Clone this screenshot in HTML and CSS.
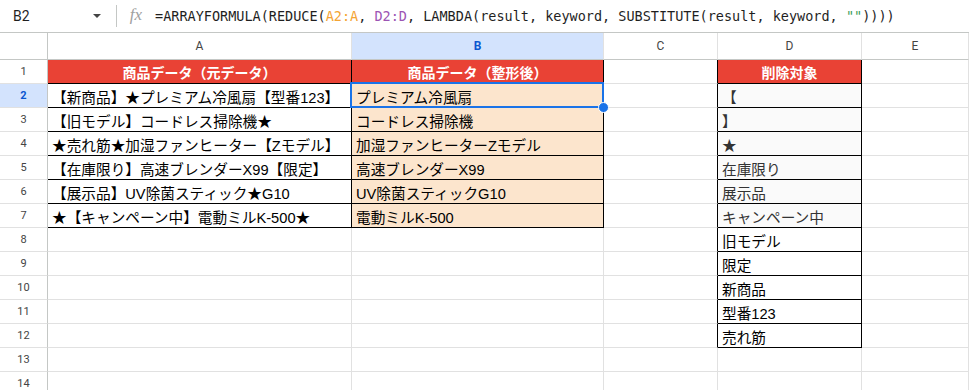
FILE: index.html
```html
<!DOCTYPE html>
<html lang="ja">
<head>
    <meta charset="UTF-8">
    <title>シート</title>
    <link rel="stylesheet" href="styles.css">
</head>
<body>

<div class="fbar">
    <div class="namebox">
        <span>B2</span>
        <i class="arrow"></i>
    </div>
    <div class="sep"></div>
    <div class="fx">fx</div>
    <div class="formula">=ARRAYFORMULA(REDUCE(<span class="r1">A2:A</span>, <span class="r2">D2:D</span>, LAMBDA(result, keyword, SUBSTITUTE(result, keyword, <span class="str">""</span>))))</div>
</div>

<div class="sheet">
    <!-- 列見出し -->
    <div class="corner"></div>
    <div class="ch">A</div>
    <div class="ch sel">B</div>
    <div class="ch">C</div>
    <div class="ch">D</div>
    <div class="ch">E</div>

    <div class="rh">1</div>
    <div class="c hd">商品データ（元データ）</div>
    <div class="c hd">商品データ（整形後）</div>
    <div class="c lb"></div>
    <div class="c hd">削除対象</div>
    <div class="c"></div>

    <div class="rh sel">2</div>
    <div class="c bk">【新商品】★プレミアム冷風扇【型番123】</div>
    <div class="c bk pe cur">プレミアム冷風扇</div>
    <div class="c lb"></div>
    <div class="c bk gr">【</div>
    <div class="c"></div>

    <div class="rh">3</div>
    <div class="c bk">【旧モデル】コードレス掃除機★</div>
    <div class="c bk pe">コードレス掃除機</div>
    <div class="c lb"></div>
    <div class="c bk gr">】</div>
    <div class="c"></div>

    <div class="rh">4</div>
    <div class="c bk">★売れ筋★加湿ファンヒーター【Zモデル】</div>
    <div class="c bk pe">加湿ファンヒーターZモデル</div>
    <div class="c lb"></div>
    <div class="c bk gr">★</div>
    <div class="c"></div>

    <div class="rh">5</div>
    <div class="c bk">【在庫限り】高速ブレンダーX99【限定】</div>
    <div class="c bk pe">高速ブレンダーX99</div>
    <div class="c lb"></div>
    <div class="c bk gr">在庫限り</div>
    <div class="c"></div>

    <div class="rh">6</div>
    <div class="c bk">【展示品】UV除菌スティック★G10</div>
    <div class="c bk pe">UV除菌スティックG10</div>
    <div class="c lb"></div>
    <div class="c bk gr">展示品</div>
    <div class="c"></div>

    <div class="rh">7</div>
    <div class="c bk">★【キャンペーン中】電動ミルK-500★</div>
    <div class="c bk pe">電動ミルK-500</div>
    <div class="c lb"></div>
    <div class="c bk gr">キャンペーン中</div>
    <div class="c"></div>

    <div class="rh">8</div>
    <div class="c"></div>
    <div class="c"></div>
    <div class="c lb"></div>
    <div class="c bk">旧モデル</div>
    <div class="c"></div>

    <div class="rh">9</div>
    <div class="c"></div>
    <div class="c"></div>
    <div class="c lb"></div>
    <div class="c bk">限定</div>
    <div class="c"></div>

    <div class="rh">10</div>
    <div class="c"></div>
    <div class="c"></div>
    <div class="c lb"></div>
    <div class="c bk">新商品</div>
    <div class="c"></div>

    <div class="rh">11</div>
    <div class="c"></div>
    <div class="c"></div>
    <div class="c lb"></div>
    <div class="c bk">型番123</div>
    <div class="c"></div>

    <div class="rh">12</div>
    <div class="c"></div>
    <div class="c"></div>
    <div class="c lb"></div>
    <div class="c bk">売れ筋</div>
    <div class="c"></div>

    <div class="rh">13</div>
    <div class="c"></div>
    <div class="c"></div>
    <div class="c"></div>
    <div class="c"></div>
    <div class="c"></div>

    <div class="rh">14</div>
    <div class="c"></div>
    <div class="c"></div>
    <div class="c"></div>
    <div class="c"></div>
    <div class="c"></div>
</div>

</body>
</html>
```

FILE: styles.css
```css
body{
    margin:0;
    background:#fff;
    overflow:hidden;
    font-family:"Liberation Sans","Noto Sans CJK JP",sans-serif;
    color:#000;
}

/* 数式バー */
.fbar{
    height:32px;
    border-bottom:1px solid #c4c7c5;
    display:flex;
    align-items:center;
}
.namebox{
    width:103px;
    padding-left:13px;
    display:flex;
    align-items:center;
    justify-content:space-between;
    font-family:Roboto,sans-serif;
    font-size:14px;
    color:#1f1f1f;
}
.arrow{
    width:0;
    height:0;
    border-left:4px solid transparent;
    border-right:4px solid transparent;
    border-top:4px solid #444;
    margin-right:15px;
}
.sep{
    width:1px;
    height:22px;
    background:#c4c7c5;
}
.fx{
    width:38px;
    text-align:center;
    font-family:"Liberation Serif",serif;
    font-style:italic;
    font-size:17px;
    color:#a0a0a0;
    margin-top:-2px;
}
.formula{
    font-family:"DejaVu Sans Mono",monospace;
    font-size:13.5px;
    color:#1f1f1f;
    white-space:nowrap;
}
.r1{
    color:#f4a434;
}
.r2{
    color:#9c55b4;
}
.str{
    color:#3a9d55;
}

/* シート */
.sheet{
    display:grid;
    grid-template-columns:48px 304px 252px 114px 144px 1fr;
    grid-template-rows:27px;
    grid-auto-rows:24px;
}
.sheet > div{
    box-sizing:border-box;
    border-right:1px solid #e1e1e1;
    border-bottom:1px solid #e1e1e1;
    white-space:nowrap;
    overflow:hidden;
}
.corner{
    border-right-color:#c4c7c5 !important;
    border-bottom-color:#c4c7c5 !important;
}
.ch{
    display:flex;
    align-items:center;
    justify-content:center;
    font-family:Roboto,sans-serif;
    font-size:12px;
    color:#444;
    border-bottom-color:#c4c7c5 !important;
    border-right-color:#e1e1e1;
}
.rh{
    display:flex;
    align-items:center;
    justify-content:center;
    font-family:Roboto,sans-serif;
    font-size:11px;
    color:#444;
    border-right-color:#c4c7c5 !important;
    border-bottom-color:#e1e1e1;
}
.ch.sel,.rh.sel{
    background:#d3e3fd;
    color:#0b57d0;
    font-weight:bold;
}
.c{
    display:flex;
    align-items:center;
    padding:1px 4px 0 4px;
    font-size:14.67px;
}
.hd{
    background:#e94235;
    color:#fff;
    font-weight:bold;
    font-size:14px;
    justify-content:center;
    border-right-color:#000 !important;
    border-bottom-color:#000 !important;
}
.bk{
    border-right-color:#000 !important;
    border-bottom-color:#000 !important;
}
.lb{
    border-right-color:#000 !important;
}
.pe{
    background:#fce5cd;
}
.gr{
    background:#fafafa;
    color:#333;
}
.cur{
    position:relative;
    overflow:visible !important;
}
.cur::before{
    content:"";
    position:absolute;
    left:-2px;
    top:-2px;
    right:-1px;
    bottom:-1px;
    border:2px solid #1a73e8;
}
.cur::after{
    content:"";
    position:absolute;
    right:-6px;
    bottom:-6px;
    width:9px;
    height:9px;
    border-radius:50%;
    background:#1a73e8;
    border:1px solid #fff;
    z-index:2;
}
```
